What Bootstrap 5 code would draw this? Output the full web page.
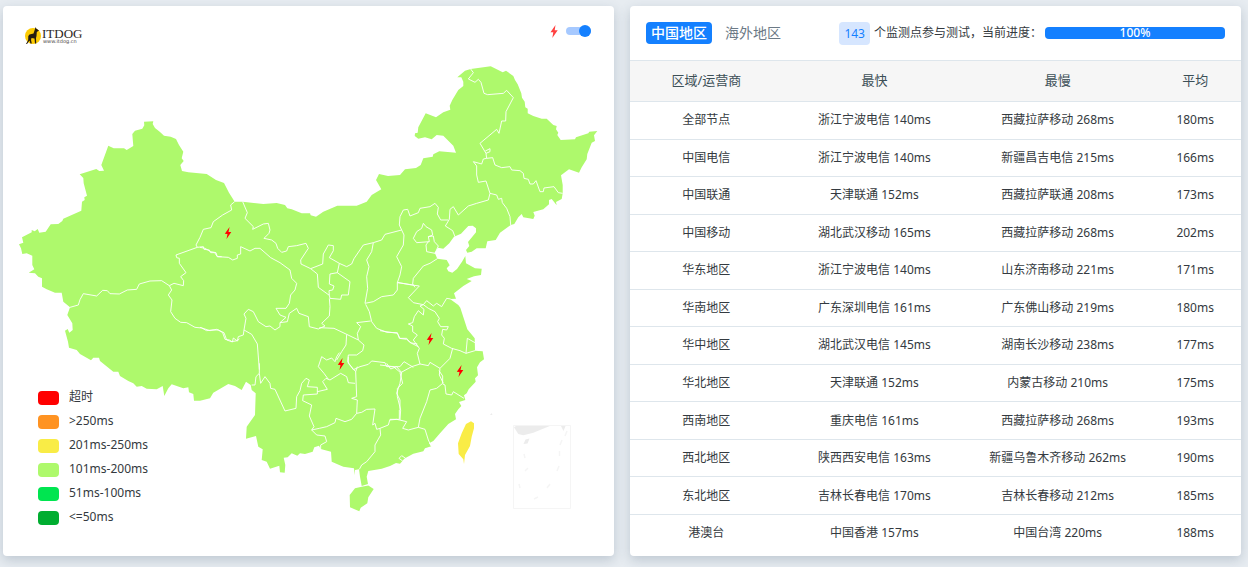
<!DOCTYPE html>
<html lang="zh-CN">
<head>
<meta charset="utf-8">
<meta name="viewport" content="width=device-width, initial-scale=1">
<title>ITDOG</title>
<link href="https://cdn.jsdelivr.net/npm/bootstrap@5.3.0/dist/css/bootstrap.min.css" rel="stylesheet">
<style>
body { background: #e7ecf1; color: #343a40; font: 12px/18px "Noto Sans", "Noto Sans CJK SC", sans-serif; }
.page-wrap { padding: 6px 7px 11px 3px; }
.panel { border: 0; border-radius: 4px; box-shadow: 0 4px 12px rgba(60, 85, 110, .24); }
.panel-top { height: 54px; padding: 0 16px; }
.map-top { padding: 0 23px 0 22px; }
.bolt-icon { fill: #ff4040; }
.map-switch { appearance: none; position: relative; width: 25px; height: 12px; margin: 0; cursor: pointer; }
.map-switch::before { content: ""; position: absolute; inset: 2px 0 2px 0; border-radius: 4px; background: #a6c9ff; }
.map-switch::after { content: ""; position: absolute; top: 0; left: 0; width: 12px; height: 12px; border-radius: 50%; background: #adb5bd; }
.map-switch:checked::after { left: auto; right: 0; background: #1480ff; }
.map-legend { left: 35px; bottom: 27px; line-height: 24px; }
.map-legend li { display: flex; align-items: center; gap: 10px; }
.swatch { width: 21px; height: 14px; border-radius: 4px; margin-top: 2px; }
.sw-timeout { background: #f00; } .sw-slow { background: #ff9322; } .sw-mid { background: #f9ec46; }
.sw-ok { background: #aef96c; } .sw-good { background: #00e550; } .sw-fast { background: #00ad30; }
.region-tabs { gap: 8px; }
.region-tabs .nav-link { padding: 0 5px; font-size: 14px; line-height: 22px; border-radius: 4px; color: #6c7a86; }
.region-tabs .nav-link.active { background: #1480ff; color: #fff; font-weight: 500; }
.count-badge { background: #d6e6ff; color: #1480ff; font-size: 12px; font-weight: 400; line-height: 23px; padding: 0 5px; border-radius: 4px; margin-right: 4px; }
.test-progress { width: 180px; height: 12px; border-radius: 4px; margin-left: 3px; font-size: 12px; overflow: visible; }
.test-progress .progress-bar { background: #1480ff; font-weight: 500; border-radius: 4px; overflow: visible; }
.stat-area { padding-bottom: 5px; }
.stat-table { height: 100%; color: #343a40; border-color: #dee6ec; text-align: center; table-layout: fixed; }
.stat-table th, .stat-table td { padding: 0 4px; vertical-align: middle; white-space: nowrap; }
.stat-table thead th { height: 41px; padding-bottom: 2px; background: #f6f6f6; border-top: 1px solid #dee6ec; font-size: 13px; font-weight: 400; color: #3c4f56; }
.stat-table tbody tr:last-child td { border-bottom: 0; }
.w-region { width: 25%; } .w-speed { width: 30%; } .w-avg { width: 15%; }
</style>
</head>
<body>
<main class="page-wrap">
<div class="d-flex gap-3 align-items-stretch">
  <section class="card panel flex-fill w-50">
    <div class="panel-top map-top d-flex align-items-center justify-content-between">
      <a href="#" aria-label="ITDOG">
        <svg class="d-block" width="60" height="24" viewBox="0 0 60 24">
          <circle cx="8" cy="15" r="8" fill="#fccb04"/>
          <path d="M1 23 3.200 19 3.300 15 4.500 13.500 8.500 12.500 10 8 10.500 6 11.200 7.500 14 9.500 11.800 11 11.500 15 11 17 11.200 22.500 10 22.500 9.500 17.500 6.500 17 6 19 6.800 22.500 5.500 22.500 4.500 19.500 2 23Z" fill="#241c10"/>
          <text x="17" y="17" font-family="Liberation Serif, serif" font-size="13" fill="#2b2624">ITDOG</text>
          <text x="18" y="22" font-family="DejaVu Sans, sans-serif" font-size="5" fill="#4b4644">www.itdog.cn</text>
        </svg>
      </a>
      <label class="d-flex align-items-center gap-2 mb-1">
        <svg class="bolt-icon" width="8" height="13" viewBox="0 0 8 13" aria-hidden="true"><path d="M5.500 0 .500 7.200 3.300 7.200 2.300 13 7.700 5.200 4.700 5.200Z"/></svg>
        <input class="map-switch" type="checkbox" role="switch" checked aria-label="超时">
      </label>
    </div>
    <svg class="d-block w-100" viewBox="3 60 611 496" role="img" aria-label="中国地区">
      <defs><path id="bolt" fill="#f00" d="M1.600-6-3.200.700-.500.900-1.500 6 3.300-1 .500-1.100Z"/></defs>
      <g fill="#aef96c">
        <path d="M19 244.300 23.300 242.700 22 237.300 31.700 232.300 31.700 230 34.700 231.300 37.700 229 39.300 232.700 45.700 231.700 50.700 224.300 58.300 224 62.300 221 63.300 218.700 81.300 210.700 82 201.700 84.700 200 84.300 197.300 87 195.700 83.700 183.300 83.300 178 79.700 174.300 96.300 169 99.300 171 104 170.700 101.300 165 108.300 145.700 113.700 148.300 124 148.300 126.700 150 133.300 146 132.300 134 135 130.700 142.300 128.700 144.300 125.300 144 121.700 153.300 121.300 152.700 124 155 128 160 132 164 135.700 170.700 136.700 176 139 179 145 183.300 151.700 181.700 158.300 183.700 161 180.300 165 182 171 188.300 172.300 206.700 174 216 180 224 183 229 192.700 234.700 201.700 242.700 201.700 263.300 204 276.700 203 285 205 287.300 208.300 291.700 209.300 301.700 213.300 310 213.300 310.700 215.300 316 216.700 323.300 211.700 337.300 205.700 356.700 205.700 366.700 201.700 371.700 195 381.300 189.300 376 180 379 174 388 176 400 175 405 169.300 416 168 420.700 165 423.300 158.300 432.700 156.700 433.300 154.300 439.300 151.300 456 152.700 453.300 145.700 443.300 135.700 436.700 135 431.700 139.300 425 137.300 418.300 138.700 414.700 136 415 133.300 417.700 132.700 418.300 127.300 425.700 113.300 436 117.300 443.300 112.300 450.300 109.700 449.700 105.700 452.300 100 458.300 90 463.300 86 463.300 81.700 461.300 77.300 457.300 77.300 465 70.700 470.700 69 490.700 66.300 502.700 72.300 506 70.700 513.300 76 515 80 517.700 84.300 521.300 93.300 522 97.700 524.700 101.700 525.300 107.300 527.700 108.700 527.700 113.300 533.300 116 541.700 118.700 546.700 118.700 553.300 125 556.700 126 556 129.300 558.300 132.700 557.300 135 560.700 140 575 139.300 576 137.300 588.300 133.300 589.300 131.700 597.300 131 594 135.300 595 141 591.700 142.700 587.300 154 586.700 159.300 581.700 167.300 579 172.700 569 169.300 561 175.300 562.700 185 562.700 193.300 561.700 199 556 202 556.700 205.300 551.700 199 549 200 549 204.300 543.300 209.300 533.300 212 534.700 215.700 533.300 219 523.300 217.300 521.700 214 518.300 217.300 514.300 224 510.700 225 500 232.700 495.700 240 487.300 241.300 485.700 248.300 476.700 248.300 471.700 251.700 467.300 252.700 466 250 469.300 246 468 242 476 232.300 476 228.300 472.700 225.700 468.300 226 461 233.700 454 236.700 449.300 243.300 443.300 248.700 438 247.700 434.700 252.700 437.300 258.700 446.700 260 449.700 265.300 446.700 268.300 448.300 271.300 452.300 272.700 457 269 462 261.700 465.300 256 466 263.300 475 268.300 481.700 268.700 481 275 474 276.300 466.700 279 471.700 281 463.300 286 454 293.300 456 298.700 450 299 458.300 305 460.300 307.700 467.300 329.300 474.700 338.300 475 350.700 482.700 351.300 484 359.300 480 362.300 477 367.300 478 375.300 475 378.300 475.700 381.700 468.700 389.300 466.700 393.300 464 395.300 465.300 400 459 402 461.300 406 458.300 409.300 455 414 456 419.300 448.300 424 440 433.300 433.300 441 429 443.300 431.300 446.300 425 448.300 423.300 451.300 413.300 453.700 405 458.300 400 463.700 396 463 390 466 381.700 468.700 368.300 471 366.700 476.700 368 484 361.700 486 360 476.700 359 469.300 355 470 354.700 475.300 354 468.300 343.300 466.700 331.700 461.700 331 451.700 320.700 449 319 445.700 314.300 447.300 312.700 451.700 305 454 300 453.300 297.300 455.700 291.700 453.300 287.700 457.300 283.700 457.700 285.300 465 284.700 472.700 280 472.300 279.300 465.700 270 468.700 266.700 461.700 261.700 460 262.700 449.300 258.300 446.700 256 436 246 438.700 246.700 426.700 255 415 255.700 393.300 251.700 390 250.700 385 246 381.700 241.700 390 235 386 228.300 384 213.300 392.700 210 398.300 200 400.700 194 400.700 193.300 394 189 392.300 188.300 387.300 183.300 388.300 171.700 384.300 168.300 388.300 164.300 396 162.700 386 156.700 389.300 146.700 388.700 141.700 386 136.700 386.700 133.300 383.300 128.300 381 120 376 118.300 371.700 113.300 371.700 100 361 99 357.700 93.300 357.700 91 360.300 80 354 76.700 350 69 347.700 68 341.700 65 330.700 67.700 329 69.300 332.700 72.700 330 72.300 323.300 67.300 315 70 307.300 63.300 301.700 61.700 292.700 55 292.700 46.700 289.300 42 286.700 42 278.300 38.300 276.700 35 273.300 28.700 272.700 34.300 269.300 32.300 265 32.300 255.700 26.700 253.300 22.300 254 21 248.300Z"/>
        <path d="M355 488.300 361.700 486.800 368.300 485.500 373.700 489 368.300 497.300 367.300 503.300 360.700 507.700 359.300 511.300 350 507.300 349.700 495Z"/>
      </g>
      <path fill="#f9ec46" d="M471 421.300 474 423.300 474 428.300 471.700 436.700 470 446 465 455 464 464 463.300 459.300 458.700 454 458 443.300 461.700 433.300 466 424Z"/>
      <!-- province borders, grouped by area and drawn at three times the map's scale -->
      <g fill="none" stroke="#fff" stroke-opacity=".9" stroke-width="3" stroke-linejoin="round">
        <path transform="translate(0 110) scale(.33333)" d="M600 382 588 405 592 412 528 435 530 443 538 445 538 460 558 488 542 500 551 512 550 527 522 520 508 527M592 412 610 410 612 418 628 420 632 428 644 428 652 440 665 440M210 592 235 585 240 569 250 551 290 558 308 541 322 542 330 551 358 552 382 540 410 538 418 522 450 513 485 512 508 527 515 540 505 555"/>
        <path transform="translate(0 280) scale(.33333)" d="M505 45 516 60 512 95 525 115 542 127 560 128 585 142 605 144 620 152 635 150 655 150 668 158 675 178 688 180 697 186 700 174 712 183 718 176"/>
        <path transform="translate(200 180) scale(.33333)" d="M104 65 92 75 95 90 68 105 40 125 33 143 10 148 0 172M128 65 142 98 135 115 160 140 158 148 190 132 205 130 210 150 207 160 192 175 215 180 228 190 233 205 245 217 260 213 265 200 290 197 318 190 325 205 302 240 303 252 332 266M332 266 368 252 370 222 385 195 400 197 400 212 388 233 418 250 412 278 450 305 445 345 425 345 422 358 390 355 388 346 355 322 352 282 332 266M412 278 390 282 388 312 402 318 398 330 387 332 388 346M418 250 440 260 455 252 462 236 490 195 520 188M0 202 15 205 32 215 48 218 52 230 85 232 98 240 112 235 112 225 122 222 122 200 150 213 165 205 180 205 195 218 212 233 240 248 270 270 275 295 290 310 285 330 272 345 268 370 258 385 228 385 240 405 258 412 240 428 240 440 225 450 210 438 198 440 175 425 160 395 145 388 132 402 138 415 132 450 130 465 115 470 112 482 95 485 80 480 72 458 50 448 30 452 0 442M132 450 155 463 172 492 178 569M240 428 262 425 268 400 290 385 297 400 325 410 328 440 355 447 375 438 365 430 388 408 390 380 388 355M358 443 402 445 440 463 475 480 472 460 482 440 470 428 512 423M440 463 438 495 425 515 410 540M475 480 492 495 488 512 470 525 445 525 443 545 460 569 480 560 505 553 515 543 555 548 560 560 600 560 612 545 640 562M592 458 598 475 620 478 635 490 655 500M520 188 515 215 500 240 507 260 500 290 503 325 495 370 520 365 545 350 580 345 592 330 592 308M497 373 508 395 515 425 530 445 560 457 592 458M520 188 545 180 555 163 605 150M605 150 612 165 610 195 590 230 605 260 600 285 592 308 640 315"/>
        <path transform="translate(400 50) scale(.33333)" d="M212 57 220 68 205 87 225 97 235 88 243 97 252 130 263 134 310 130 320 121 340 143 318 185 317 213 305 213 297 250 290 238 240 280 258 310 270 305 270 296 256 303M258 310 260 325 278 323 285 345 305 353 330 350 335 360 360 362 370 370 372 385 385 388 390 402 400 402 408 392 420 425 430 425 432 414 462 410 475 428 488 430M260 325 250 327 245 342 220 335 230 348 230 375 235 397 258 393 270 430 290 435 295 448 305 445 307 458 320 475 330 500 332 525M270 430 265 450 230 460 205 468 175 495 160 470 150 478 148 508 136 528 158 542 165 560"/>
        <path transform="translate(380 200) scale(.33333)" d="M65 90 58 75 60 50 70 30 83 28 90 48 115 38 120 25 150 20 165 10 175 22 172 42 182 60 205 60M130 70 138 80 155 90 158 105 145 110 148 125 110 128 100 115 110 95 125 85ZM145 110 160 108 163 125 175 138 165 160 140 155 138 135 145 125M172 176 150 190 130 198 100 235 98 252 105 262M52 247 95 255 118 258 85 293 100 308 130 314 140 302 160 318 170 310 185 320 200 295 212 297M130 314 120 318 132 328 130 345 115 332 103 350 98 368 85 372 98 378 98 395 112 405 100 420 118 445 112 460 120 492M130 314 145 325 165 335 178 355 173 365 182 380 205 380 200 390 188 388 185 405 193 415 190 432 215 445 240 452 258 460 262 415 285 428M258 460 285 452M218 445 210 475 180 505 178 525 190 550M120 492 145 497 150 487 180 505M0 392 52 400 60 415 80 415 90 428 112 432M120 492 95 500 62 518 40 500 0 495"/>
        <path transform="translate(220 330) scale(.33333)" d="M118 100 118 130 122 160 135 140 150 160 152 175 165 178 195 243 228 235 230 200 240 182 245 160 258 145 268 150 262 170 292 172 292 192 250 195 248 212 275 225 268 258 282 290 275 300M95 165 105 165 108 140 118 130M292 185 322 178 308 155 318 145 330 150 362 130 380 140 385 158 405 160M325 148 312 130 295 110 305 80 320 90 335 84 345 95 350 80 358 68M407 125 410 200 395 205 412 210 410 250 395 268 375 275 348 265 345 278 320 290 298 295 275 300 290 315 315 318 320 335 302 345 302 357M385 80 385 100 407 125 412 110M500 100 512 117 530 110 545 128 540 160 530 190 540 210 540 240M538 240 538 268 510 268 505 285 480 295 470 298 465 280 458 285 465 237 440 238 425 247 410 250M480 295 482 315 465 345 465 365 440 395 425 405 418 418"/>
        <path transform="translate(390 340) scale(.33333)" d="M30 98 38 130 22 145 22 170 32 210 30 240M0 240 20 238 50 245 38 265 55 270 85 262 90 235 110 185 120 150 140 145 158 130 158 108 147 92M85 262 105 268 115 300 124 319M158 132 165 135 168 162 185 165 190 155 222 175M27 355 35 347 47 355 38 363Z"/>
      </g>
      <g fill="#ececec">
        <path d="M514 427.300 516.700 425.500H551L533.300 432.700 523.300 435.300 518.300 434Z"/>
        <path d="M561 426H565.500L563.500 431ZM523.500 444 525.500 439.500 529.500 438.500 527.500 443.500ZM490 415 491.500 413 492.500 415Z"/>
      </g>
      <g fill="none" stroke="#f5f5f5"><path d="M513.500 425.500H570.500V508.500H513.500Z"/><path stroke-width="1.500" d="M567 431 565 436M562 440 560 445M559.500 451V456M559 466 557 471M550 484 547 488M538 497 534 499M519 484 520 488M525 471 528 468M524 454 525 458"/></g>
      <use href="#bolt" x="228" y="233"/><use href="#bolt" x="430" y="339"/><use href="#bolt" x="341" y="364"/><use href="#bolt" x="460" y="371"/>
    </svg>
    <ul class="map-legend list-unstyled position-absolute mb-0">
      <li><span class="swatch sw-timeout"></span>超时</li>
      <li><span class="swatch sw-slow"></span>&gt;250ms</li>
      <li><span class="swatch sw-mid"></span>201ms-250ms</li>
      <li><span class="swatch sw-ok"></span>101ms-200ms</li>
      <li><span class="swatch sw-good"></span>51ms-100ms</li>
      <li><span class="swatch sw-fast"></span>&lt;=50ms</li>
    </ul>
  </section>

  <section class="card panel flex-fill w-50 overflow-visible">
    <div class="panel-top d-flex align-items-center justify-content-between">
      <nav class="nav nav-pills region-tabs">
        <a class="nav-link active" href="#" aria-current="page">中国地区</a>
        <a class="nav-link" href="#">海外地区</a>
      </nav>
      <div class="d-flex align-items-center">
        <span class="badge count-badge">143</span>
        <span>个监测点参与测试，当前进度：</span>
        <div class="progress test-progress" role="progressbar" aria-valuenow="100" aria-valuemin="0" aria-valuemax="100" aria-label="当前进度">
          <div class="progress-bar w-100">100%</div>
        </div>
      </div>
    </div>
    <div class="stat-area flex-grow-1">
      <table class="table stat-table mb-0">
        <thead><tr><th class="w-region" scope="col">区域/运营商</th><th class="w-speed" scope="col">最快</th><th class="w-speed" scope="col">最慢</th><th class="w-avg" scope="col">平均</th></tr></thead>
        <tbody>
          <tr><td>全部节点</td><td>浙江宁波电信 140ms</td><td>西藏拉萨移动 268ms</td><td>180ms</td></tr>
          <tr><td>中国电信</td><td>浙江宁波电信 140ms</td><td>新疆昌吉电信 215ms</td><td>166ms</td></tr>
          <tr><td>中国联通</td><td>天津联通 152ms</td><td>西藏拉萨联通 208ms</td><td>173ms</td></tr>
          <tr><td>中国移动</td><td>湖北武汉移动 165ms</td><td>西藏拉萨移动 268ms</td><td>202ms</td></tr>
          <tr><td>华东地区</td><td>浙江宁波电信 140ms</td><td>山东济南移动 221ms</td><td>171ms</td></tr>
          <tr><td>华南地区</td><td>广东深圳电信 161ms</td><td>广东佛山移动 219ms</td><td>180ms</td></tr>
          <tr><td>华中地区</td><td>湖北武汉电信 145ms</td><td>湖南长沙移动 238ms</td><td>177ms</td></tr>
          <tr><td>华北地区</td><td>天津联通 152ms</td><td>内蒙古移动 210ms</td><td>175ms</td></tr>
          <tr><td>西南地区</td><td>重庆电信 161ms</td><td>西藏拉萨移动 268ms</td><td>193ms</td></tr>
          <tr><td>西北地区</td><td>陕西西安电信 163ms</td><td>新疆乌鲁木齐移动 262ms</td><td>190ms</td></tr>
          <tr><td>东北地区</td><td>吉林长春电信 170ms</td><td>吉林长春移动 212ms</td><td>185ms</td></tr>
          <tr><td>港澳台</td><td>中国香港 157ms</td><td>中国台湾 220ms</td><td>188ms</td></tr>
        </tbody>
      </table>
    </div>
  </section>
</div>
</main>
<script src="https://cdn.jsdelivr.net/npm/bootstrap@5.3.0/dist/js/bootstrap.bundle.min.js"></script>
</body>
</html>
